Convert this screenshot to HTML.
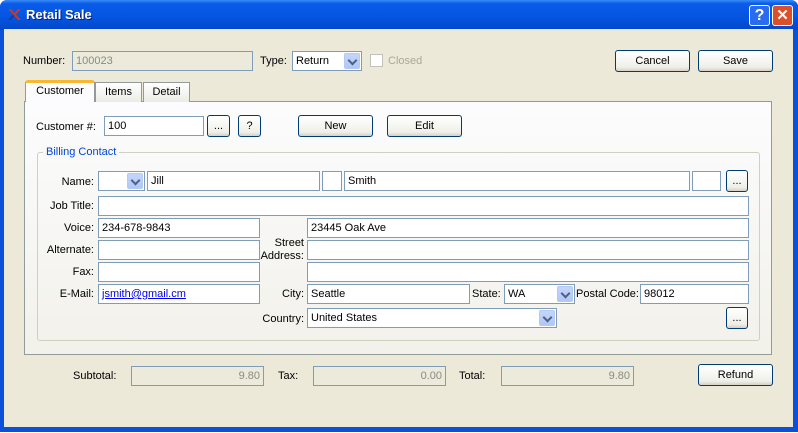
<!DOCTYPE html>
<html><head><style>
*{box-sizing:border-box;margin:0;padding:0}
body{width:798px;height:433px;background:#fff;font-family:"Liberation Sans",sans-serif;font-size:11px;color:#000;position:relative;overflow:hidden}
.win{position:absolute;left:0;top:0;width:798px;height:432px;background:#0a50d8;border-radius:7px 7px 0 0}
.title{position:absolute;left:0;top:0;width:798px;height:30px;background:linear-gradient(#3a8cf8 0,#0a5ce8 12%,#0454e0 60%,#0448c8 100%);border-radius:7px 7px 0 0}
.client{position:absolute;left:4px;top:29px;width:789px;height:398px;background:#ece9d8}
.a{position:absolute}
.lbl{position:absolute;white-space:nowrap;line-height:13px}
.r{text-align:right}
.f{position:absolute;background:#fff;border:1px solid #7f9db9;height:20px;line-height:19px;padding-left:3px;white-space:nowrap}
.dis{background:#ebeadb;color:#8a8a80}
.btn{position:absolute;border:1px solid #003c74;border-radius:3px;background:linear-gradient(#fff,#f0f0ea 80%,#d6d0c5);text-align:center;line-height:21px;height:22px}
.dd{position:absolute;right:1px;top:1px;width:16px;height:16px;background:linear-gradient(#c4d6fb,#b0c8f6);border-radius:2px;border:1px solid #b6c9f3}
.dd:after{content:"";position:absolute;left:4px;top:3px;width:5px;height:5px;border-right:2px solid #4d6185;border-bottom:2px solid #4d6185;transform:rotate(45deg)}
</style></head><body>
<div class="win"></div>
<div class="title"></div>
<svg class="a" style="left:7px;top:9px" width="14" height="11" viewBox="0 0 14 11"><path d="M1 0 L6 5.5 L1 11 H4 L7.5 7 L11 11 H14 L9 5.5 L14 0 H11 L7.5 4 L4 0Z" fill="#e03010"/><path d="M1 11 L6 5.5 L7.5 7 L4 11Z" fill="#1a3a9a"/></svg>
<div class="lbl" style="left:26px;top:8px;color:#fff;font-weight:bold;font-size:13px;text-shadow:1px 1px #0a1e6e">Retail Sale</div>
<div class="a" style="left:749px;top:5px;width:21px;height:21px;border:1px solid #fff;border-radius:3px;background:#2a6cf0;color:#fff;font-weight:bold;font-size:16px;text-align:center;line-height:19px">?</div>
<div class="a" style="left:772px;top:5px;width:21px;height:21px;border:1px solid #fff;border-radius:3px;background:#d9502a;color:#fff;font-weight:bold;font-size:15px;text-align:center;line-height:19px">✕</div>
<div class="client"></div>

<div class="lbl" style="left:23px;top:55px">Number:</div>
<div class="f dis" style="left:72px;top:51px;width:181px">100023</div>
<div class="lbl" style="left:260px;top:55px">Type:</div>
<div class="f" style="left:292px;top:51px;width:70px">Return<div class="dd"></div></div>
<div class="a" style="left:370px;top:54px;width:13px;height:13px;border:1px solid #c4c2b8;background:#fff"></div>
<div class="lbl" style="left:388px;top:55px;color:#aca899">Closed</div>
<div class="btn" style="left:615px;top:50px;width:75px">Cancel</div>
<div class="btn" style="left:698px;top:50px;width:75px">Save</div>

<div class="a" style="left:24px;top:101px;width:748px;height:254px;border:1px solid #919b9c;background:linear-gradient(#fcfcfe,#f2f1ea)"></div>
<div class="a" style="left:95px;top:82px;width:47px;height:20px;border:1px solid #919b9c;border-bottom:none;background:linear-gradient(#fff,#ecebe5);text-align:center;line-height:18px">Items</div>
<div class="a" style="left:143px;top:82px;width:47px;height:20px;border:1px solid #919b9c;border-bottom:none;background:linear-gradient(#fff,#ecebe5);text-align:center;line-height:18px">Detail</div>
<div class="a" style="left:25px;top:80px;width:70px;height:22px;border:1px solid #919b9c;border-top:3px solid #f9b732;border-bottom:none;background:#fcfcfe;text-align:center;line-height:17px;border-radius:3px 3px 0 0">Customer</div>

<div class="lbl" style="left:36px;top:121px">Customer #:</div>
<div class="f" style="left:104px;top:116px;width:100px">100</div>
<div class="btn" style="left:207px;top:115px;width:23px">...</div>
<div class="btn" style="left:238px;top:115px;width:23px">?</div>
<div class="btn" style="left:298px;top:115px;width:75px">New</div>
<div class="btn" style="left:387px;top:115px;width:75px">Edit</div>

<div class="a" style="left:37px;top:152px;width:723px;height:189px;border:1px solid #d0d0bf;border-radius:3px"></div>
<div class="lbl" style="left:43px;top:146px;background:#f8f8f6;color:#0046d5;padding:0 3px">Billing Contact</div>

<div class="lbl r" style="left:30px;width:64px;top:176px">Name:</div>
<div class="f" style="left:98px;top:171px;width:47px"><div class="dd"></div></div>
<div class="f" style="left:147px;top:171px;width:173px">Jill</div>
<div class="f" style="left:322px;top:171px;width:20px"></div>
<div class="f" style="left:344px;top:171px;width:346px">Smith</div>
<div class="f" style="left:692px;top:171px;width:29px"></div>
<div class="btn" style="left:726px;top:170px;width:22px">...</div>

<div class="lbl r" style="left:30px;width:64px;top:200px">Job Title:</div>
<div class="f" style="left:98px;top:196px;width:651px"></div>

<div class="lbl r" style="left:30px;width:64px;top:222px">Voice:</div>
<div class="f" style="left:98px;top:218px;width:162px">234-678-9843</div>
<div class="lbl r" style="left:30px;width:64px;top:244px">Alternate:</div>
<div class="f" style="left:98px;top:240px;width:162px"></div>
<div class="lbl r" style="left:30px;width:64px;top:266px">Fax:</div>
<div class="f" style="left:98px;top:262px;width:162px"></div>
<div class="lbl r" style="left:30px;width:64px;top:288px">E-Mail:</div>
<div class="f" style="left:98px;top:284px;width:162px;color:#0000ee;text-decoration:underline">jsmith@gmail.cm</div>

<div class="f" style="left:307px;top:218px;width:442px">23445 Oak Ave</div>
<div class="lbl r" style="left:250px;width:54px;top:237px">Street<br>Address:</div>
<div class="f" style="left:307px;top:240px;width:442px"></div>
<div class="f" style="left:307px;top:262px;width:442px"></div>
<div class="lbl r" style="left:250px;width:54px;top:288px">City:</div>
<div class="f" style="left:307px;top:284px;width:163px">Seattle</div>
<div class="lbl" style="left:472px;top:288px">State:</div>
<div class="f" style="left:504px;top:284px;width:71px">WA<div class="dd"></div></div>
<div class="lbl" style="left:576px;top:288px">Postal Code:</div>
<div class="f" style="left:640px;top:284px;width:109px">98012</div>
<div class="lbl r" style="left:250px;width:54px;top:313px">Country:</div>
<div class="f" style="left:307px;top:308px;width:250px">United States<div class="dd"></div></div>
<div class="btn" style="left:726px;top:307px;width:22px">...</div>

<div class="lbl" style="left:73px;top:370px">Subtotal:</div>
<div class="f dis" style="left:131px;top:366px;width:133px;text-align:right;padding-right:3px">9.80</div>
<div class="lbl" style="left:278px;top:370px">Tax:</div>
<div class="f dis" style="left:313px;top:366px;width:133px;text-align:right;padding-right:3px">0.00</div>
<div class="lbl" style="left:459px;top:370px">Total:</div>
<div class="f dis" style="left:501px;top:366px;width:133px;text-align:right;padding-right:3px">9.80</div>
<div class="btn" style="left:698px;top:364px;width:75px">Refund</div>
</body></html>
